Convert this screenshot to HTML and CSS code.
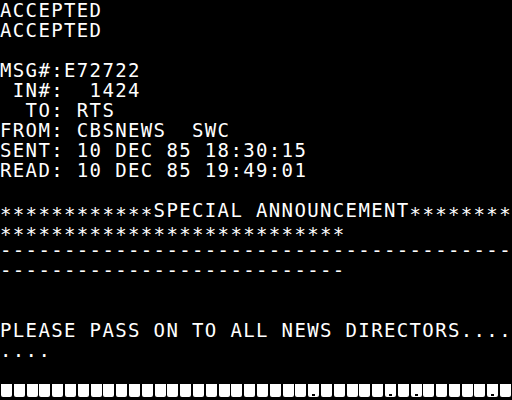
FILE: index.html
```html
<!DOCTYPE html>
<html>
<head>
<meta charset="utf-8">
<link rel="stylesheet" href="styles.css">
</head>
<body>
<div class="screen">
<pre class="term">ACCEPTED
ACCEPTED

MSG#:E72722
 IN#:  1424
  TO: RTS
FROM: CBSNEWS  SWC
SENT: 10 DEC 85 18:30:15
READ: 10 DEC 85 19:49:01

<span class="ast">************</span>SPECIAL ANNOUNCEMENT<span class="ast">********</span>
<span class="ast">***************************</span>
----------------------------------------
---------------------------


PLEASE PASS ON TO ALL NEWS DIRECTORS....
....
</pre>
<div class="blocks">
<span class="b"></span><span class="b"></span><span class="b"></span><span class="b"></span><span class="b"></span><span class="b"></span><span class="b"></span><span class="b"></span><span class="b"></span><span class="b"></span>
<span class="b"></span><span class="b"></span><span class="b"></span><span class="b"></span><span class="b"></span><span class="b"></span><span class="b"></span><span class="b"></span><span class="b"></span><span class="b"></span>
<span class="b"></span><span class="b"></span><span class="b"></span><span class="b"></span><span class="b dot"></span><span class="b"></span><span class="b"></span><span class="b"></span><span class="b"></span><span class="b"></span>
<span class="b dot"></span><span class="b"></span><span class="b dot"></span><span class="b"></span><span class="b"></span><span class="b"></span><span class="b"></span><span class="b"></span><span class="b dot"></span><span class="b"></span>
</div>
</div>
</body>
</html>
```
FILE: styles.css
```css
html, body {
  margin: 0;
  padding: 0;
  background: #000;
}
.screen {
  width: 512px;
  height: 400px;
  background: #000;
  overflow: hidden;
}
.term {
  margin: 0;
  color: #fff;
  font-family: "DejaVu Sans Mono", "Liberation Mono", monospace;
  font-size: 19px;
  line-height: 20px;
  letter-spacing: 1.36px;
  height: 380px;
  white-space: pre;
}
.ast {
  display: inline-block;
  transform: translateY(4px);
}
.blocks {
  display: grid;
  grid-template-columns: repeat(40, 12.8px);
  height: 20px;
  padding-top: 4px;
  box-sizing: border-box;
  font-size: 0;
}
.b {
  position: relative;
  display: block;
  width: 11px;
  height: 13px;
  margin-left: 1px;
  background: #fff;
  border-radius: 0 0 2px 2px;
}
.b.dot::after {
  content: "";
  position: absolute;
  left: 4px;
  bottom: 1px;
  width: 3px;
  height: 2px;
  background: #000;
}
```
